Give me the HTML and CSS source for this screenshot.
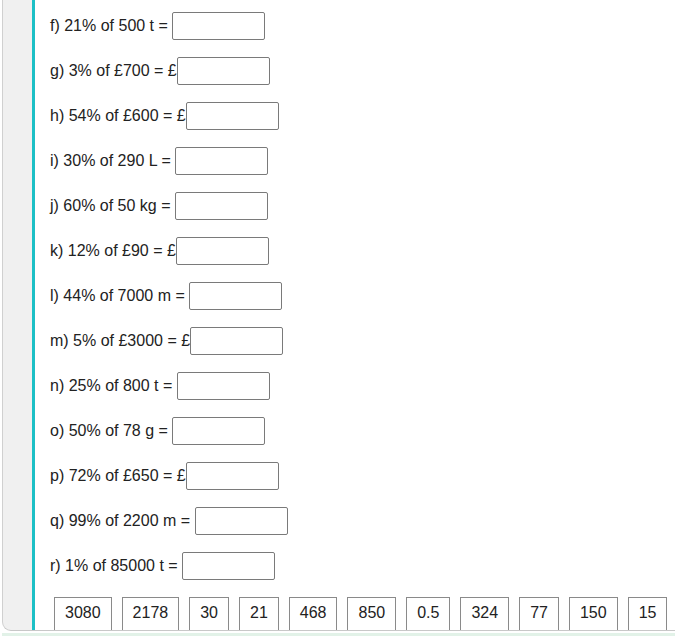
FILE: index.html
```html
<!DOCTYPE html>
<html lang="en">
<head>
  <meta charset="UTF-8" />
  <title>Percentages of amounts</title>
  <link rel="stylesheet" href="styles.css">
</head>
<body>
  <div class="sheet">
    <div class="questions">
      <div class="q">f) 21% of 500 t = <input type="text"></div>
      <div class="q">g) 3% of £700 = £<input type="text"></div>
      <div class="q">h) 54% of £600 = £<input type="text"></div>
      <div class="q">i) 30% of 290 L = <input type="text"></div>
      <div class="q">j) 60% of 50 kg = <input type="text"></div>
      <div class="q">k) 12% of £90 = £<input type="text"></div>
      <div class="q">l) 44% of 7000 m = <input type="text"></div>
      <div class="q">m) 5% of £3000 = £<input type="text"></div>
      <div class="q">n) 25% of 800 t = <input type="text"></div>
      <div class="q">o) 50% of 78 g = <input type="text"></div>
      <div class="q">p) 72% of £650 = £<input type="text"></div>
      <div class="q">q) 99% of 2200 m = <input type="text"></div>
      <div class="q">r) 1% of 85000 t = <input type="text"></div>
      <div class="answers">
        <span class="ans">3080</span>
        <span class="ans">2178</span>
        <span class="ans">30</span>
        <span class="ans">21</span>
        <span class="ans">468</span>
        <span class="ans">850</span>
        <span class="ans">0.5</span>
        <span class="ans">324</span>
        <span class="ans">77</span>
        <span class="ans">150</span>
        <span class="ans">15</span>
      </div>
    </div>
  </div>
  <div class="footer-strip"></div>
</body>
</html>
```

FILE: styles.css
```css
body {
  margin: 0 0 0 2px;
  font-family: "Liberation Sans", Arial, sans-serif;
  font-size: 16px;
  color: #222;
  background: #fff;
  overflow: hidden;
}
.sheet {
  height: 630px;
  background: #f0f0f0;
  border-left: 1px solid #d0d0d0;
  border-bottom: 1px solid #c8c8c8;
  border-bottom-left-radius: 9px;
  padding-left: 29px;
  overflow: hidden;
}
.questions {
  height: 100%;
  background: #fff;
  border-left: 3px solid #1cc0c6;
  padding: 12px 0 0 15px;
  overflow: hidden;
}
.q {
  height: 28px;
  line-height: 28px;
  margin-bottom: 17px;
  white-space: nowrap;
}
.q input {
  box-sizing: border-box;
  width: 93px;
  height: 28px;
  margin: 0;
  border: 1px solid #7a7a7a;
  border-radius: 2px;
  vertical-align: top;
  font: inherit;
}
.answers {
  display: flex;
  gap: 10px;
  margin-top: 4px;
  padding-left: 4px;
}
.ans {
  border: 1px solid #8a8a8a;
  padding: 6px 10px 12px;
  line-height: 18px;
}
.footer-strip {
  height: 3px;
  margin-top: 2px;
  margin-left: -2px;
  background: #e2f2e8;
}
```
